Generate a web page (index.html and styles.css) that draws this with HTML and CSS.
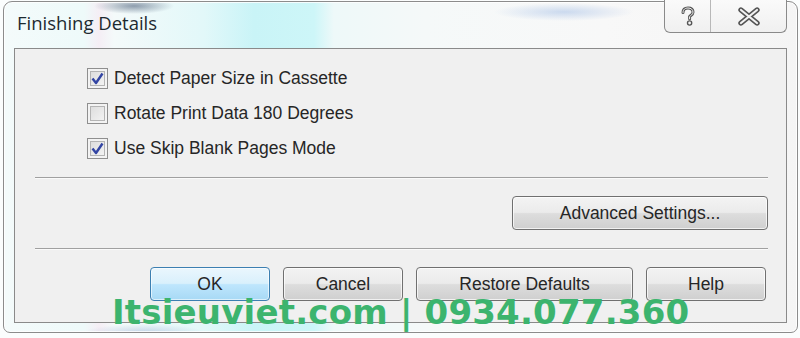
FILE: index.html
```html
<!DOCTYPE html>
<html lang="en">
<head>
    <meta charset="UTF-8">
    <title>Finishing Details</title>
    <link rel="stylesheet" href="styles.css">
</head>
<body>
    <div class="window">
        <div class="titlebar">
            <div class="title">Finishing Details</div>
            <div class="caption-buttons">
                <div class="cap-btn help-btn">
                    <svg width="16" height="21" viewBox="0 0 16 21">
                        <path d="M3 6.5 C3 3 5.5 2 8 2 C11 2 13 3.6 13 6.2 C13 8.6 10.5 9.4 9.6 10.6 L9.6 12.8" fill="none" stroke="#555" stroke-width="3" stroke-linecap="round"/>
                        <path d="M3 6.5 C3 3 5.5 2 8 2 C11 2 13 3.6 13 6.2 C13 8.6 10.5 9.4 9.6 10.6 L9.6 12.8" fill="none" stroke="#f4f4f4" stroke-width="1" stroke-linecap="round"/>
                        <circle cx="9.6" cy="17" r="2.1" fill="#f4f4f4" stroke="#555" stroke-width="1.4"/>
                    </svg>
                </div>
                <div class="cap-btn close-btn">
                    <svg width="24" height="19" viewBox="0 0 24 19">
                        <path d="M4 3 L20 16 M20 3 L4 16" fill="none" stroke="#555" stroke-width="5.4" stroke-linecap="round"/>
                        <path d="M4 3 L20 16 M20 3 L4 16" fill="none" stroke="#f2f2f2" stroke-width="2.2" stroke-linecap="round"/>
                    </svg>
                </div>
            </div>
        </div>
        <div class="client">
            <div class="options">
                <label class="option">
                    <span class="check checked"><svg width="13" height="13" viewBox="0 0 13 13"><path d="M1.5 6.5 L5 11 L11.5 1.5" fill="none" stroke="#3345a3" stroke-width="2.4" stroke-linejoin="round"/></svg></span>
                    Detect Paper Size in Cassette
                </label>
                <label class="option">
                    <span class="check"></span>
                    Rotate Print Data 180 Degrees
                </label>
                <label class="option">
                    <span class="check checked"><svg width="13" height="13" viewBox="0 0 13 13"><path d="M1.5 6.5 L5 11 L11.5 1.5" fill="none" stroke="#3345a3" stroke-width="2.4" stroke-linejoin="round"/></svg></span>
                    Use Skip Blank Pages Mode
                </label>
            </div>
            <div class="separator"></div>
            <div class="advanced-row">
                <button class="btn advanced">Advanced Settings...</button>
            </div>
            <div class="separator"></div>
            <div class="button-row">
                <button class="btn default">OK</button>
                <button class="btn">Cancel</button>
                <button class="btn restore">Restore Defaults</button>
                <button class="btn">Help</button>
            </div>
        </div>
    </div>
    <div class="watermark">Itsieuviet.com | 0934.077.360</div>
</body>
</html>
```

FILE: styles.css
```css
body {
    margin: 0;
    width: 800px;
    height: 338px;
    overflow: hidden;
    background: #fbfdfd;
    font-family: 'Liberation Sans', Arial, sans-serif;
    color: #222;
    position: relative;
}

.window {
    margin: 1px 2px 0 3px;
    height: 330px;
    border: 1px solid #8c8c8c;
    border-radius: 9px 9px 7px 7px;
    background:
        radial-gradient(ellipse 40px 8px at 130px 4px, rgba(60, 80, 110, 0.55), transparent),
        radial-gradient(ellipse 70px 9px at 560px 10px, rgba(120, 160, 220, 0.35), transparent),
        radial-gradient(ellipse 60px 8px at 140px 330px, rgba(120, 150, 200, 0.35), transparent),
        linear-gradient(90deg, #f4fbfb 0px, #eefafa 80px, #f5eef5 95px, #f4fafa 110px, #e2f8f9 200px, #c9f4f7 250px, #cdf6f8 310px, #eef9f9 330px, #f5f9f9 420px, #f8f8f8 600px, #f5f5f5 800px);
    display: flex;
    flex-direction: column;
    box-shadow: inset 0 0 0 1px rgba(255, 255, 255, 0.8);
}

.titlebar {
    height: 46px;
    display: flex;
    justify-content: space-between;
    align-items: flex-start;
    padding: 0 10px 0 13px;
}

.title {
    margin-top: 8px;
    font-family: 'Open Sans', 'DejaVu Sans', sans-serif;
    font-size: 18.5px;
    color: #1d2a30;
}

.caption-buttons {
    display: flex;
    margin-top: -2px;
    border: 1px solid #8a8a8a;
    border-top: none;
    border-radius: 0 0 6px 6px;
    overflow: hidden;
    background: linear-gradient(#fafafa, #f0f0f0);
}

.cap-btn {
    height: 32px;
    display: flex;
    align-items: center;
    justify-content: center;
}

.help-btn {
    width: 45px;
    border-right: 1px solid #b8b8b8;
}

.close-btn {
    width: 75px;
}

.client {
    flex: 1;
    margin: 0 10px 9px 10px;
    border: 1px solid #8a8a8a;
    background: #f0f0f0;
    padding: 19px 18px 0 20px;
    display: flex;
    flex-direction: column;
}

.options {
    display: flex;
    flex-direction: column;
    gap: 14px;
    padding-left: 52px;
}

.option {
    display: flex;
    align-items: center;
    gap: 6px;
    height: 21px;
    font-size: 17.5px;
    color: #262626;
}

.check {
    width: 19px;
    height: 19px;
    border: 1px solid #8f8f8f;
    background: linear-gradient(135deg, #d9d9d9, #f7f7f7);
    box-shadow: inset 0 0 0 2px #f3f3f3, inset 0 0 0 3px #b4b4b4;
    display: flex;
    align-items: center;
    justify-content: center;
}

.separator {
    height: 1px;
    background: #a0a0a0;
    border-bottom: 1px solid #fafafa;
    margin-top: 18px;
}

.advanced-row {
    display: flex;
    justify-content: flex-end;
    margin-top: 17px;
}

.btn {
    height: 34px;
    border: 1px solid #707070;
    border-radius: 4px;
    background: linear-gradient(#f3f3f3 0%, #ebebeb 48%, #dddddd 52%, #cfcfcf 100%);
    box-shadow: inset 0 0 0 1px rgba(255, 255, 255, 0.7);
    font-family: 'Liberation Sans', Arial, sans-serif;
    font-size: 17.5px;
    color: #262626;
    padding: 0;
    width: 120px;
}

.advanced {
    width: 256px;
}

.button-row {
    display: flex;
    gap: 13px;
    margin-top: 17px;
    padding-left: 115px;
}

.restore {
    width: 217px;
}

.default {
    border-color: #3c7fb1;
    background: linear-gradient(#eaf6fd 0%, #d9f0fc 48%, #bee6fd 52%, #a7d9f5 100%);
    box-shadow: inset 0 0 0 1px rgba(255, 255, 255, 0.6);
}

.watermark {
    position: absolute;
    left: 112px;
    top: 292px;
    font-family: 'DejaVu Sans', Verdana, sans-serif;
    font-weight: bold;
    font-size: 34px;
    color: #3cb46e;
    white-space: nowrap;
    letter-spacing: 0.2px;
}
```
